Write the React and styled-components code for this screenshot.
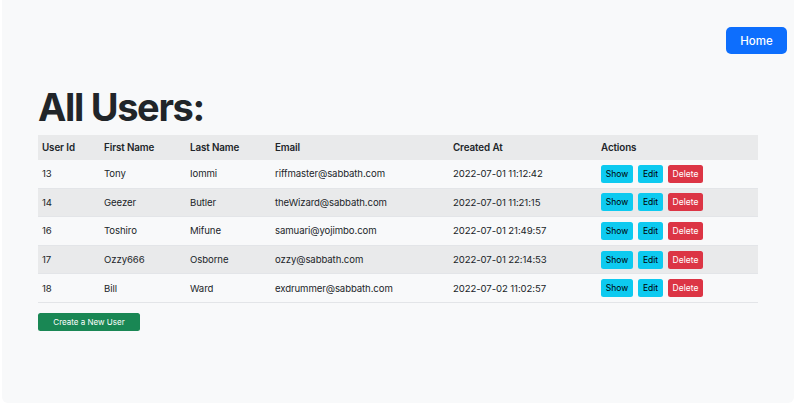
import styled, { createGlobalStyle } from "styled-components";

const GlobalStyle = createGlobalStyle`
  html, body {
    margin: 0;
    padding: 0;
    background: #ffffff;
  }

  body {
    font-family: Inter, "Noto Sans", "Liberation Sans", sans-serif;
    color: #212529;
    -webkit-font-smoothing: antialiased;
  }
`

const Panel = styled.div`
  box-sizing: border-box;
  width: 792px;
  height: 403px;
  margin-left: 2px;
  background-color: #f8f9fa;
  border-radius: 0 0 6px 6px;
  display: flex;
  flex-direction: column;
`

const TopBar = styled.div`
  display: flex;
  justify-content: flex-end;
  padding: 27px 7px 0 0;
`

const HomeButton = styled.button`
  box-sizing: border-box;
  width: 61px;
  height: 27px;
  border: none;
  border-radius: 5px;
  background-color: #0d6efd;
  color: #ffffff;
  font-family: inherit;
  font-size: 11.5px;
  font-weight: 500;
  cursor: pointer;
`

const Content = styled.main`
  padding: 0 36px;
`

const Heading = styled.h1`
  margin: 29px 0 4px;
  font-size: 38px;
  line-height: 48px;
  font-weight: 700;
  letter-spacing: -0.035em;
  color: #212529;
`

const Table = styled.table`
  width: 720px;
  border-collapse: collapse;
  table-layout: fixed;
  font-size: 9.6px;
  letter-spacing: -0.01em;
`

const HeadCell = styled.th`
  box-sizing: border-box;
  width: ${props => props.$width};
  height: 25px;
  padding: 0 4px;
  text-align: left;
  font-size: 9.8px;
  font-weight: 600;
  background-color: #e9eaeb;
  vertical-align: middle;
`

const Row = styled.tr`
  background-color: ${props => props.$striped ? '#e9eaeb' : 'transparent'};
`

const Cell = styled.td`
  height: 27.6px;
  padding: 0 4px;
  border-bottom: 1px solid #e3e5e8;
  vertical-align: middle;
  white-space: nowrap;
`

const Actions = styled.div`
  display: flex;
  gap: 5px;
`

const SmallButton = styled.button`
  box-sizing: border-box;
  height: 18px;
  width: ${props => props.$width};
  padding: 0;
  border: none;
  border-radius: 2.5px;
  background-color: ${props => props.$danger ? '#dc3545' : '#0dcaf0'};
  color: ${props => props.$danger ? '#ffffff' : '#000000'};
  font-family: inherit;
  font-size: 8.5px;
  cursor: pointer;
`

const CreateButton = styled.button`
  box-sizing: border-box;
  margin-top: 10px;
  width: 102px;
  height: 18px;
  padding: 0;
  border: none;
  border-radius: 2.5px;
  background-color: #198754;
  color: #ffffff;
  font-family: inherit;
  font-size: 8px;
  cursor: pointer;
`

const users = [
  { id: 13, first: "Tony", last: "Iommi", email: "riffmaster@sabbath.com", created: "2022-07-01 11:12:42" },
  { id: 14, first: "Geezer", last: "Butler", email: "theWizard@sabbath.com", created: "2022-07-01 11:21:15" },
  { id: 16, first: "Toshiro", last: "Mifune", email: "samuari@yojimbo.com", created: "2022-07-01 21:49:57" },
  { id: 17, first: "Ozzy666", last: "Osborne", email: "ozzy@sabbath.com", created: "2022-07-01 22:14:53" },
  { id: 18, first: "Bill", last: "Ward", email: "exdrummer@sabbath.com", created: "2022-07-02 11:02:57" },
];

export default function App() {
  return (
    <>
      <GlobalStyle />
      <Panel>
        <TopBar>
          <HomeButton>Home</HomeButton>
        </TopBar>
        <Content>
          <Heading>All Users:</Heading>
          <Table>
            <thead>
              <tr>
                <HeadCell $width="62px">User Id</HeadCell>
                <HeadCell $width="86px">First Name</HeadCell>
                <HeadCell $width="85px">Last Name</HeadCell>
                <HeadCell $width="178px">Email</HeadCell>
                <HeadCell $width="148px">Created At</HeadCell>
                <HeadCell $width="161px">Actions</HeadCell>
              </tr>
            </thead>
            <tbody>
              {users.map((user, i) => (
                <Row key={user.id} $striped={i % 2 === 1}>
                  <Cell>{user.id}</Cell>
                  <Cell>{user.first}</Cell>
                  <Cell>{user.last}</Cell>
                  <Cell>{user.email}</Cell>
                  <Cell>{user.created}</Cell>
                  <Cell>
                    <Actions>
                      <SmallButton $width="32px">Show</SmallButton>
                      <SmallButton $width="25px">Edit</SmallButton>
                      <SmallButton $width="35px" $danger>Delete</SmallButton>
                    </Actions>
                  </Cell>
                </Row>
              ))}
            </tbody>
          </Table>
          <CreateButton>Create a New User</CreateButton>
        </Content>
      </Panel>
    </>
  )
}
